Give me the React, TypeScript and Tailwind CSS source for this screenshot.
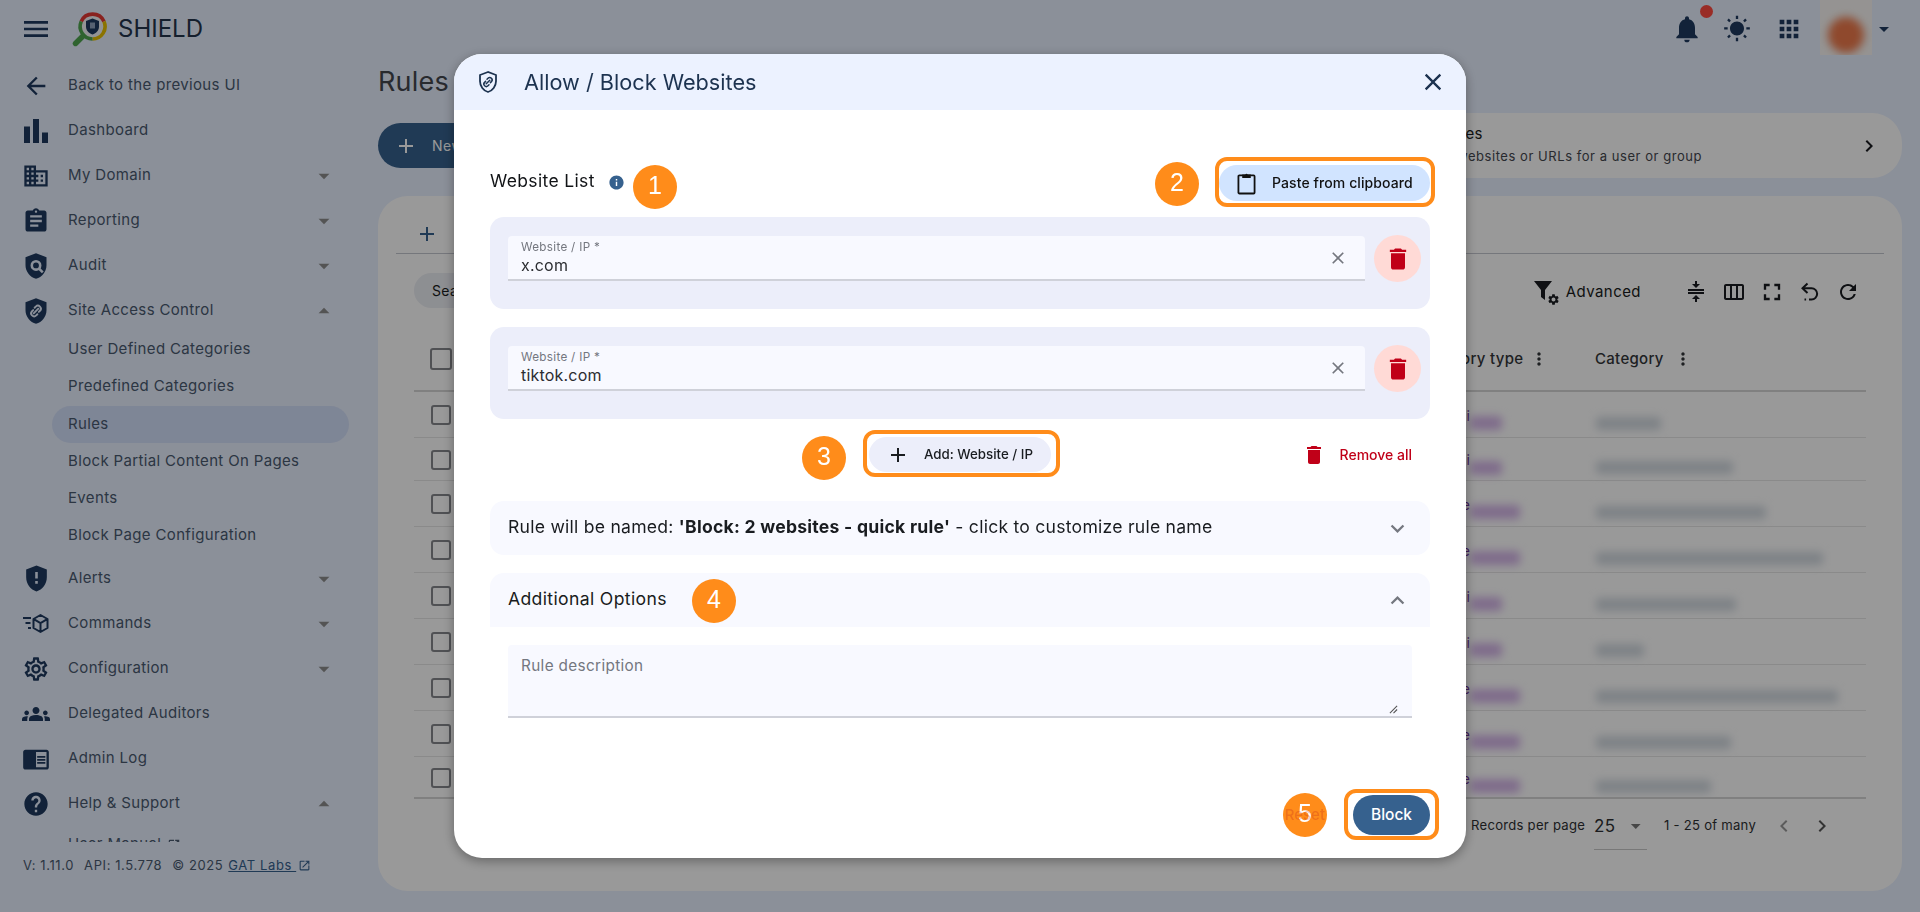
import {
  MdAdd, MdApps, MdArrowBack, MdArrowDropDown, MdArrowDropUp, MdAssignment, MdBarChart, MdChevronLeft, MdChevronRight,
  MdChromeReaderMode, MdClose, MdCompress, MdDelete, MdDomain, MdExpandLess, MdExpandMore, MdFullscreen, MdGppMaybe,
  MdGroups, MdHelp, MdInfo, MdMenu, MdMoreVert, MdNotifications, MdOpenInNew, MdOutlineSettings, MdOutlineViewWeek,
  MdRefresh, MdSettings, MdWbSunny,
} from 'react-icons/md'

const BG = '#e8f0ff'

function AuditIcon({ className }: { className?: string }) {
  return (
    <svg viewBox="0 0 24 24" className={className}>
      <path d="M12 1 3 4.5v6.6c0 5.5 3.8 10.6 9 11.9 5.2-1.3 9-6.4 9-11.9V4.5z" fill="currentColor" />
      <circle cx="12" cy="11.5" r="3.6" fill="none" stroke={BG} strokeWidth="2.2" />
      <path d="m14.6 14.2 3.2 3.2" stroke={BG} strokeWidth="2.2" />
    </svg>
  )
}

function LinkShield({ className }: { className?: string }) {
  return (
    <svg viewBox="0 0 24 24" className={className}>
      <path d="M12 1 3 4.5v6.6c0 5.5 3.8 10.6 9 11.9 5.2-1.3 9-6.4 9-11.9V4.5z" fill="currentColor" />
      <path d="m10.8 9.2 1-1a2.5 2.5 0 0 1 3.6 3.6l-1 1M13.2 14.8l-1 1a2.5 2.5 0 0 1-3.6-3.6l1-1M10 14l4-4" fill="none" stroke={BG} strokeWidth="1.6" strokeLinecap="round" />
    </svg>
  )
}

function OutlineLinkShield({ className }: { className?: string }) {
  return (
    <svg viewBox="0 0 24 24" className={className} fill="none" stroke="currentColor">
      <path d="M12 2 4 5v6.2c0 4.9 3.4 9.5 8 10.8 4.6-1.3 8-5.9 8-10.8V5z" strokeWidth="1.8" />
      <path d="m11 9.2 1-1a2.4 2.4 0 0 1 3.4 3.4l-1 1M13 14.8l-1 1a2.4 2.4 0 0 1-3.4-3.4l1-1M10.2 13.8l3.6-3.6" strokeWidth="1.5" strokeLinecap="round" />
    </svg>
  )
}

function CommandsIcon({ className }: { className?: string }) {
  return (
    <svg viewBox="0 0 28 24" className={className} fill="none" stroke="currentColor">
      <path d="M1 6h8M3.5 11h5M6 16h3" strokeWidth="2" />
      <path d="m18.5 3 7 4v9l-7 4-7-4V7zM11.8 7.2l6.7 3.9 6.7-3.9M18.5 11v9" strokeWidth="2" strokeLinejoin="round" />
    </svg>
  )
}

function ClipboardIcon({ className }: { className?: string }) {
  return (
    <svg viewBox="0 0 20 24" className={className}>
      <path d="M2.5 3.5h15a1 1 0 0 1 1 1v17a1 1 0 0 1-1 1h-15a1 1 0 0 1-1-1v-17a1 1 0 0 1 1-1z" fill="none" stroke="currentColor" strokeWidth="1.9" />
      <path d="M5.5 2.5h3.2a1.4 1.4 0 0 1 2.6 0h3.2v3.8h-9z" fill="currentColor" />
    </svg>
  )
}

function UndoDotted({ className }: { className?: string }) {
  return (
    <svg viewBox="0 0 24 24" className={className} fill="none" stroke="currentColor" strokeWidth="2">
      <path d="m9.5 3.5-5 4.7 5 4.8" />
      <path d="M5 8.2h8.5a5.6 5.6 0 0 1 0 11.3H11" />
      <path d="M6.5 19.5h1.6" />
    </svg>
  )
}

function Logo() {
  return (
    <svg viewBox="0 0 36 36" className="w-[36px] h-[36px]">
      <circle cx="20.5" cy="15.5" r="12.5" fill="#f3f5f8" />
      <path d="M9.2 10.5A12.5 12.5 0 0 1 32 10.5" fill="none" stroke="#e53935" strokeWidth="3.6" />
      <path d="M32 10.5a12.5 12.5 0 0 1-11.5 17.5" fill="none" stroke="#e8c000" strokeWidth="3.6" />
      <path d="M20.5 28A12.5 12.5 0 0 1 9.2 10.5" fill="none" stroke="#4fa64f" strokeWidth="3.6" />
      <path d="m10.5 25.5-7 7" stroke="#4fa64f" strokeWidth="5.4" strokeLinecap="round" />
      <path d="M20.5 7.5 14 10v5.5c0 3.8 2.8 7 6.5 8 3.7-1 6.5-4.2 6.5-8V10z" fill="#1e3a5f" />
      <path d="M18 11.5h5v6h-5z" fill="#8fa2bd" />
    </svg>
  )
}

function NavRow({ icon: Icon, label, caret, h = 'h-[45px]', iconSize = 'w-[28px] h-[28px]' }: { icon: any; label: string; caret?: 'up' | 'down'; h?: string; iconSize?: string }) {
  return (
    <div className={`flex items-center pl-[24px] ${h}`}>
      <span className="w-[24px] flex justify-center">
        <Icon className={`shrink-0 text-[#1e3a5f] ${iconSize}`} />
      </span>
      <span className="ml-[20px] flex-1 text-[15px] tracking-[0.35px] text-[#4a5a70]">{label}</span>
      {caret === 'down' && <MdArrowDropDown className="w-[26px] h-[26px] mr-[41px] text-[#8c8c8c]" />}
      {caret === 'up' && <MdArrowDropUp className="w-[26px] h-[26px] mr-[41px] text-[#8c8c8c]" />}
    </div>
  )
}

function SubRow({ label, active }: { label: string; active?: boolean }) {
  return (
    <div className={`h-[37px] ml-[52px] w-[297px] pl-[16px] flex items-center rounded-full text-[15px] tracking-[0.35px] text-[#4a5a70] ${active ? 'bg-[#d3dffa] mt-px' : ''}`}>
      {label}
    </div>
  )
}

function Sidebar() {
  return (
    <aside className="w-[378px] shrink-0 flex flex-col">
      <nav className="h-[785px] pt-[6px] overflow-hidden">
        <NavRow icon={MdArrowBack} label="Back to the previous UI" />
        <NavRow icon={MdBarChart} label="Dashboard" iconSize="w-[36px] h-[36px]" />
        <NavRow icon={MdDomain} label="My Domain" caret="down" />
        <NavRow icon={MdAssignment} label="Reporting" caret="down" />
        <NavRow icon={AuditIcon} label="Audit" caret="down" />
        <NavRow icon={LinkShield} label="Site Access Control" caret="up" h="h-[43px] pt-[2px]" />
        <SubRow label="User Defined Categories" />
        <SubRow label="Predefined Categories" />
        <SubRow label="Rules" active />
        <SubRow label="Block Partial Content On Pages" />
        <SubRow label="Events" />
        <SubRow label="Block Page Configuration" />
        <div className="h-[2px]" />
        <NavRow icon={MdGppMaybe} label="Alerts" caret="down" iconSize="w-[31px] h-[31px]" />
        <NavRow icon={CommandsIcon} label="Commands" caret="down" />
        <NavRow icon={MdOutlineSettings} label="Configuration" caret="down" />
        <NavRow icon={MdGroups} label="Delegated Auditors" />
        <NavRow icon={MdChromeReaderMode} label="Admin Log" />
        <NavRow icon={MdHelp} label="Help & Support" caret="up" />
        <div className="h-[37px] ml-[68px] flex items-center gap-[6px] text-[15px] tracking-[0.35px] text-[#4a5a70]">
          User Manual <MdOpenInNew className="w-[14px] h-[14px]" />
        </div>
      </nav>
      <div className="pl-[23px] mt-[14px] flex items-center text-[13px] tracking-[0.6px] text-[#4a5a70]">
        <span>V: 1.11.0</span>
        <span className="ml-[10px]">API: 1.5.778</span>
        <span className="ml-[10px]">© 2025</span>
        <span className="ml-[5px] underline text-[#36618e]">GAT Labs&nbsp;</span>
        <MdOpenInNew className="ml-[2px] w-[13px] h-[13px] text-[#36618e]" />
      </div>
    </aside>
  )
}

const rows = [
  { c: 'i', h: 'h-[46px]', p: 'w-[32px]', g: 'w-[65px]', b: true },
  { c: 'i', h: 'h-[43px]', p: 'w-[32px]', g: 'w-[137px]', b: true },
  { c: 'e', h: 'h-[46px]', p: 'w-[50px]', g: 'w-[170px]', b: true },
  { c: 'e', h: 'h-[46px]', p: 'w-[50px]', g: 'w-[227px]', b: true },
  { c: 'i', h: 'h-[46px]', p: 'w-[32px]', g: 'w-[140px]', b: true },
  { c: 'i', h: 'h-[46px]', p: 'w-[32px]', g: 'w-[48px]', b: true },
  { c: 'e', h: 'h-[46px]', p: 'w-[50px]', g: 'w-[242px]', b: true },
  { c: 'e', h: 'h-[46px]', p: 'w-[50px]', g: 'w-[135px]', b: true },
  { c: 'e', h: 'h-[41px]', p: 'w-[50px]', g: 'w-[115px]', b: false },
]

function RulesTable() {
  return (
    <section className="mt-[18px] h-[695px] rounded-[30px] bg-white relative">
      <div className="h-[58px] mx-[18px] border-b border-[#c4c6cf] flex items-center pl-[19px]">
        <MdAdd className="w-[24px] h-[24px] mt-[18px] text-[#36618e]" />
      </div>
      <div className="h-[71px] pt-[20px] pl-[36px] pr-[42px] flex items-start">
        <div className="h-[35px] -mt-px w-[180px] rounded-full bg-[#eceef4] pl-[18px] flex items-center text-[14px] tracking-[0.3px] text-[#191c20]">Search</div>
        <div className="ml-auto flex items-center h-[36px] text-[#191c20]">
          <span className="relative w-[24px] h-[26px] mr-[9px]">
            <svg viewBox="0 0 20 22" className="w-[20px] h-[24px]"><path d="M1 1h18l-7 9v10l-4-3v-7z" fill="currentColor" /></svg>
            <MdSettings className="absolute right-[-3px] bottom-[-1px] w-[13px] h-[13px]" />
          </span>
          <span className="text-[15px] tracking-[0.45px]">Advanced</span>
          <span className="ml-[43px] flex items-center gap-[14px]">
            <MdCompress className="w-[24px] h-[24px]" />
            <MdOutlineViewWeek className="w-[24px] h-[24px]" />
            <MdFullscreen className="w-[28px] h-[28px] -mx-[2px]" />
            <UndoDotted className="w-[24px] h-[24px]" />
            <MdRefresh className="w-[24px] h-[24px]" />
          </span>
        </div>
      </div>
      <div className="mx-[36px] h-[67px] pt-[3px] border-b-2 border-[#d5d5d5] flex items-center text-[15px] tracking-[0.3px] font-medium text-[#33363a]">
        <span className="ml-[16px] w-[22px] h-[22px] rounded-[3px] border-2 border-[#85878c]" />
        <span className="flex-1" />
        <span className="w-[178px] flex items-center">
          <span className="w-[104px] whitespace-nowrap text-right">Category type</span>
          <MdMoreVert className="ml-[8px] w-[20px] h-[20px]" />
        </span>
        <span className="w-[271px] flex items-center">
          <span>Category</span>
          <MdMoreVert className="ml-[9px] w-[20px] h-[20px]" />
        </span>
      </div>
      <div className="mx-[36px] h-[407px] overflow-hidden border-b-2 border-[#d5d5d5]">
        {rows.map((r, i) => (
          <div key={i} className={`flex items-center pt-px ${r.h} ${r.b ? 'border-b border-[#e6e6e6]' : ''}`}>
            <span className="ml-[17px] w-[20px] h-[20px] rounded-[3px] border-2 border-[#85878c]" />
            <span className="flex-1" />
            <span className="w-[130px] flex items-center text-[14px] text-[#5a1b8a]">
              <span className="w-[4px] overflow-hidden flex justify-end">{r.c}</span>
              <span className={`h-[14px] mt-[16px] rounded-sm bg-[#d4b4e8] blur-[4px] ${r.p}`} />
            </span>
            <span className="w-[270px] flex items-center">
              <span className={`h-[13px] mt-[16px] rounded-sm bg-[#d2d9e0] blur-[4px] ${r.g}`} />
            </span>
          </div>
        ))}
      </div>
      <div className="mx-[36px] flex items-start justify-end pr-[32px] pt-[15px] text-[13.1px] tracking-[0.25px] text-[#2e3033]">
        <span className="mt-[2px]">Records per page</span>
        <span className="ml-[9px] w-[53px] h-[36px] border-b border-[#c9c9c9] flex items-start text-[17px] tracking-[0.4px]">
          25
          <MdArrowDropDown className="ml-[8px] w-[24px] h-[24px] text-[#777]" />
        </span>
        <span className="ml-[17px] mt-[2px]">1 - 25 of many</span>
        <MdChevronLeft className="ml-[16px] w-[24px] h-[24px] text-[#9a9a9a]" />
        <MdChevronRight className="ml-[14px] w-[24px] h-[24px] text-[#555]" />
      </div>
    </section>
  )
}

function Main() {
  return (
    <main className="flex-1 pr-[18px]">
      <h1 className="h-[56px] pb-[8px] flex items-center text-[27px] tracking-[0.2px] leading-none text-[#44474e]">Rules</h1>
      <div className="flex h-[65px] gap-[18px]">
        <div className="mt-[10px] h-[45px] w-[200px] rounded-full bg-[#36618e] text-white flex items-center pl-[16px] text-[14px]">
          <MdAdd className="w-[24px] h-[24px]" />
          <span className="ml-[14px] tracking-[0.5px]">New Rule</span>
        </div>
        <div className="ml-auto w-[570px] rounded-[30px] bg-white flex items-center pr-[21px] pl-[84px]">
          <div className="flex-1 pb-[2px] leading-tight whitespace-nowrap">
            <div className="text-[15px] tracking-[0.2px] text-[#191c20]">Websites</div>
            <div className="mt-[5px] text-[13px] tracking-[0.55px] text-[#44474e]">Block websites or URLs for a user or group</div>
          </div>
          <MdChevronRight className="w-[24px] h-[24px] text-[#191c20]" />
        </div>
      </div>
      <RulesTable />
    </main>
  )
}

function Header() {
  return (
    <header className="h-[57px] flex items-center shrink-0">
      <MdMenu className="ml-[20px] w-[32px] h-[32px] text-[#1e3a5f]" />
      <span className="ml-[20px]"><Logo /></span>
      <span className="ml-[10px] text-[24px] text-[#24344c]">SHIELD</span>
      <div className="ml-auto flex items-center self-stretch relative">
        <span className="relative">
          <MdNotifications className="w-[32px] h-[32px] text-[#1e3a5f]" />
          <span className="absolute right-[-10px] top-[-8px] w-[13px] h-[13px] rounded-full bg-[#ff4a40]" />
        </span>
        <MdWbSunny className="ml-[20px] w-[28px] h-[28px] text-[#1e3a5f]" />
        <MdApps className="ml-[24px] w-[28px] h-[28px] text-[#1e3a5f]" />
        <div className="ml-[17px] w-[52px] h-[55px] self-start bg-[#f8f6f4] overflow-hidden flex items-center justify-center">
          <span className="mt-[14px] w-[36px] h-[36px] rounded-full bg-[#ee7a4c] blur-[4px]" />
        </div>
        <MdArrowDropDown className="mr-[24px] w-[24px] h-[24px] text-[#1e3a5f]" />
      </div>
    </header>
  )
}

function Badge({ n, className }: { n: number; className: string }) {
  return (
    <span className={`absolute w-[44px] h-[44px] pb-[3px] rounded-full flex items-center justify-center text-white text-[25px] font-['Liberation_Sans',sans-serif] z-10 ${className}`}>{n}</span>
  )
}

function Outline({ className }: { className: string }) {
  return <span className={`absolute border-[4px] border-[#ff8c1a] rounded-[12px] pointer-events-none ${className}`} />
}

function WebsiteItem({ value, className }: { value: string; className?: string }) {
  return (
    <div className={`h-[92px] rounded-[14px] bg-[#eceefa] pl-[18px] pt-[19px] flex items-start ${className ?? ''}`}>
      <div className="w-[857px] h-[45px] rounded-t-[4px] bg-[#f8f9ff] border-b-2 border-[#cfd1d9] pl-[13px] pr-[17px] flex items-center">
        <div className="flex-1 leading-none">
          <div className="text-[11.7px] tracking-[0.3px] text-[#74777f]">Website / IP *</div>
          <div className="mt-[3px] text-[16px] tracking-[0.2px] text-[#2b2d31]">{value}</div>
        </div>
        <MdClose className="w-[20px] h-[20px] text-[#74777f]" />
      </div>
      <span className="ml-[9px] -mt-px w-[47px] h-[47px] rounded-full bg-[#ffdad6] flex items-center justify-center">
        <MdDelete className="w-[28px] h-[28px] text-[#c00018]" />
      </span>
    </div>
  )
}

function Modal() {
  return (
    <div className="relative w-[1012px] h-[804px] rounded-[28px] bg-white shadow-[0_3px_12px_rgba(0,0,0,0.35)] flex flex-col overflow-hidden">
      <div className="h-[56px] bg-[#ecf2ff] flex items-center pl-[22px] pr-[19px] text-[#1d3350]">
        <OutlineLinkShield className="w-[24px] h-[24px]" />
        <span className="ml-[24px] flex-1 text-[21.7px]">Allow / Block Websites</span>
        <MdClose className="w-[28px] h-[28px]" />
      </div>
      <div className="px-[36px] flex-1 flex flex-col">
        <div className="mt-[55px] h-[36px] flex items-center">
          <span className="pb-[3px] text-[17.5px] tracking-[0.35px] text-[#111316]">Website List</span>
          <MdInfo className="ml-[13px] mb-[2px] w-[17px] h-[17px] text-[#36618e]" />
          <div className="ml-auto h-[36px] w-[211px] rounded-full bg-[#d1e4ff] flex items-center pl-[18px] text-[#111]">
            <ClipboardIcon className="w-[19px] h-[23px]" />
            <span className="ml-[16px] pb-px text-[14px] font-medium tracking-[0.1px]">Paste from clipboard</span>
          </div>
        </div>
        <WebsiteItem value="x.com" className="mt-[16px]" />
        <WebsiteItem value="tiktok.com" className="mt-[18px]" />
        <div className="mt-[18px] h-[35px] grid grid-cols-[1fr_182px_1fr]">
          <span />
          <div className="rounded-full bg-[#eceefa] flex items-center pl-[17px] text-[#191c20]">
            <MdAdd className="w-[24px] h-[24px]" />
            <span className="ml-[14px] text-[13.3px] font-medium whitespace-nowrap">Add: Website / IP</span>
          </div>
          <div className="flex items-center justify-end pr-[18px] text-[#c00018]">
            <MdDelete className="w-[24px] h-[24px]" />
            <span className="ml-[14px] text-[14px] font-medium">Remove all</span>
          </div>
        </div>
        <div className="mt-[29px] h-[54px] rounded-[14px] bg-[#f8f9ff] flex items-center pl-[18px] pr-[19px] text-[17.6px] tracking-[0.24px] text-[#191c20]">
          <span className="flex-1 pb-[2px]">Rule will be named: <b>'Block: 2 websites - quick rule'</b> - click to customize rule name</span>
          <MdExpandMore className="w-[27px] h-[27px] text-[#74777f]" />
        </div>
        <div className="mt-[18px] h-[54px] rounded-t-[14px] bg-[#f8f9ff] flex items-center pl-[18px] pr-[19px] text-[17.6px] tracking-[0.35px] text-[#191c20]">
          <span className="flex-1 pb-[2px]">Additional Options</span>
          <MdExpandLess className="w-[27px] h-[27px] text-[#74777f]" />
        </div>
        <div className="mt-[18px] mx-[18px] h-[73px] rounded-t-[4px] bg-[#f8f9ff] border-b-2 border-[#cfd1d9] relative pl-[13px] pt-[10px] text-[15.3px] tracking-[0.35px] text-[#74777f]">
          Rule description
          <svg viewBox="0 0 10 10" className="absolute right-[14px] bottom-[2px] w-[9px] h-[9px]" stroke="#555" strokeWidth="1.2"><path d="M1 9 9 1M5 9l4-4" /></svg>
        </div>
        <div className="mt-auto mb-[23px] flex items-center justify-end">
          <span className="relative z-20 text-[15px] text-[#ba1a1a]/25 font-medium">Reset</span>
          <div className="ml-[28px] w-[77px] h-[40px] rounded-full bg-[#36618e] text-white flex items-center justify-center text-[15.5px] font-medium">Block</div>
        </div>
      </div>
      <Badge n={1} className="left-[179px] top-[111px] bg-[#ff8c1a]" />
      <Badge n={2} className="left-[701px] top-[108px] bg-[#ff8c1a]" />
      <Badge n={3} className="left-[348px] top-[382px] bg-[#ff8c1a]" />
      <Badge n={4} className="left-[238px] top-[525px] bg-[#ff8c1a]" />
      <Badge n={5} className="left-[829px] top-[739px] bg-[#ff8c1a]" />
      <Outline className="left-[761px] top-[103px] w-[220px] h-[50px]" />
      <Outline className="left-[409px] top-[376px] w-[197px] h-[47px]" />
      <Outline className="left-[890px] top-[735px] w-[95px] h-[51px]" />
    </div>
  )
}

export default function App() {
  return (
    <div className="h-screen overflow-hidden flex flex-col bg-[#e8f0ff] font-[Inter,sans-serif]">
      <Header />
      <div className="flex flex-1">
        <Sidebar />
        <Main />
      </div>
      <div className="fixed inset-0 bg-black/40 flex items-center justify-center">
        <Modal />
      </div>
    </div>
  )
}
